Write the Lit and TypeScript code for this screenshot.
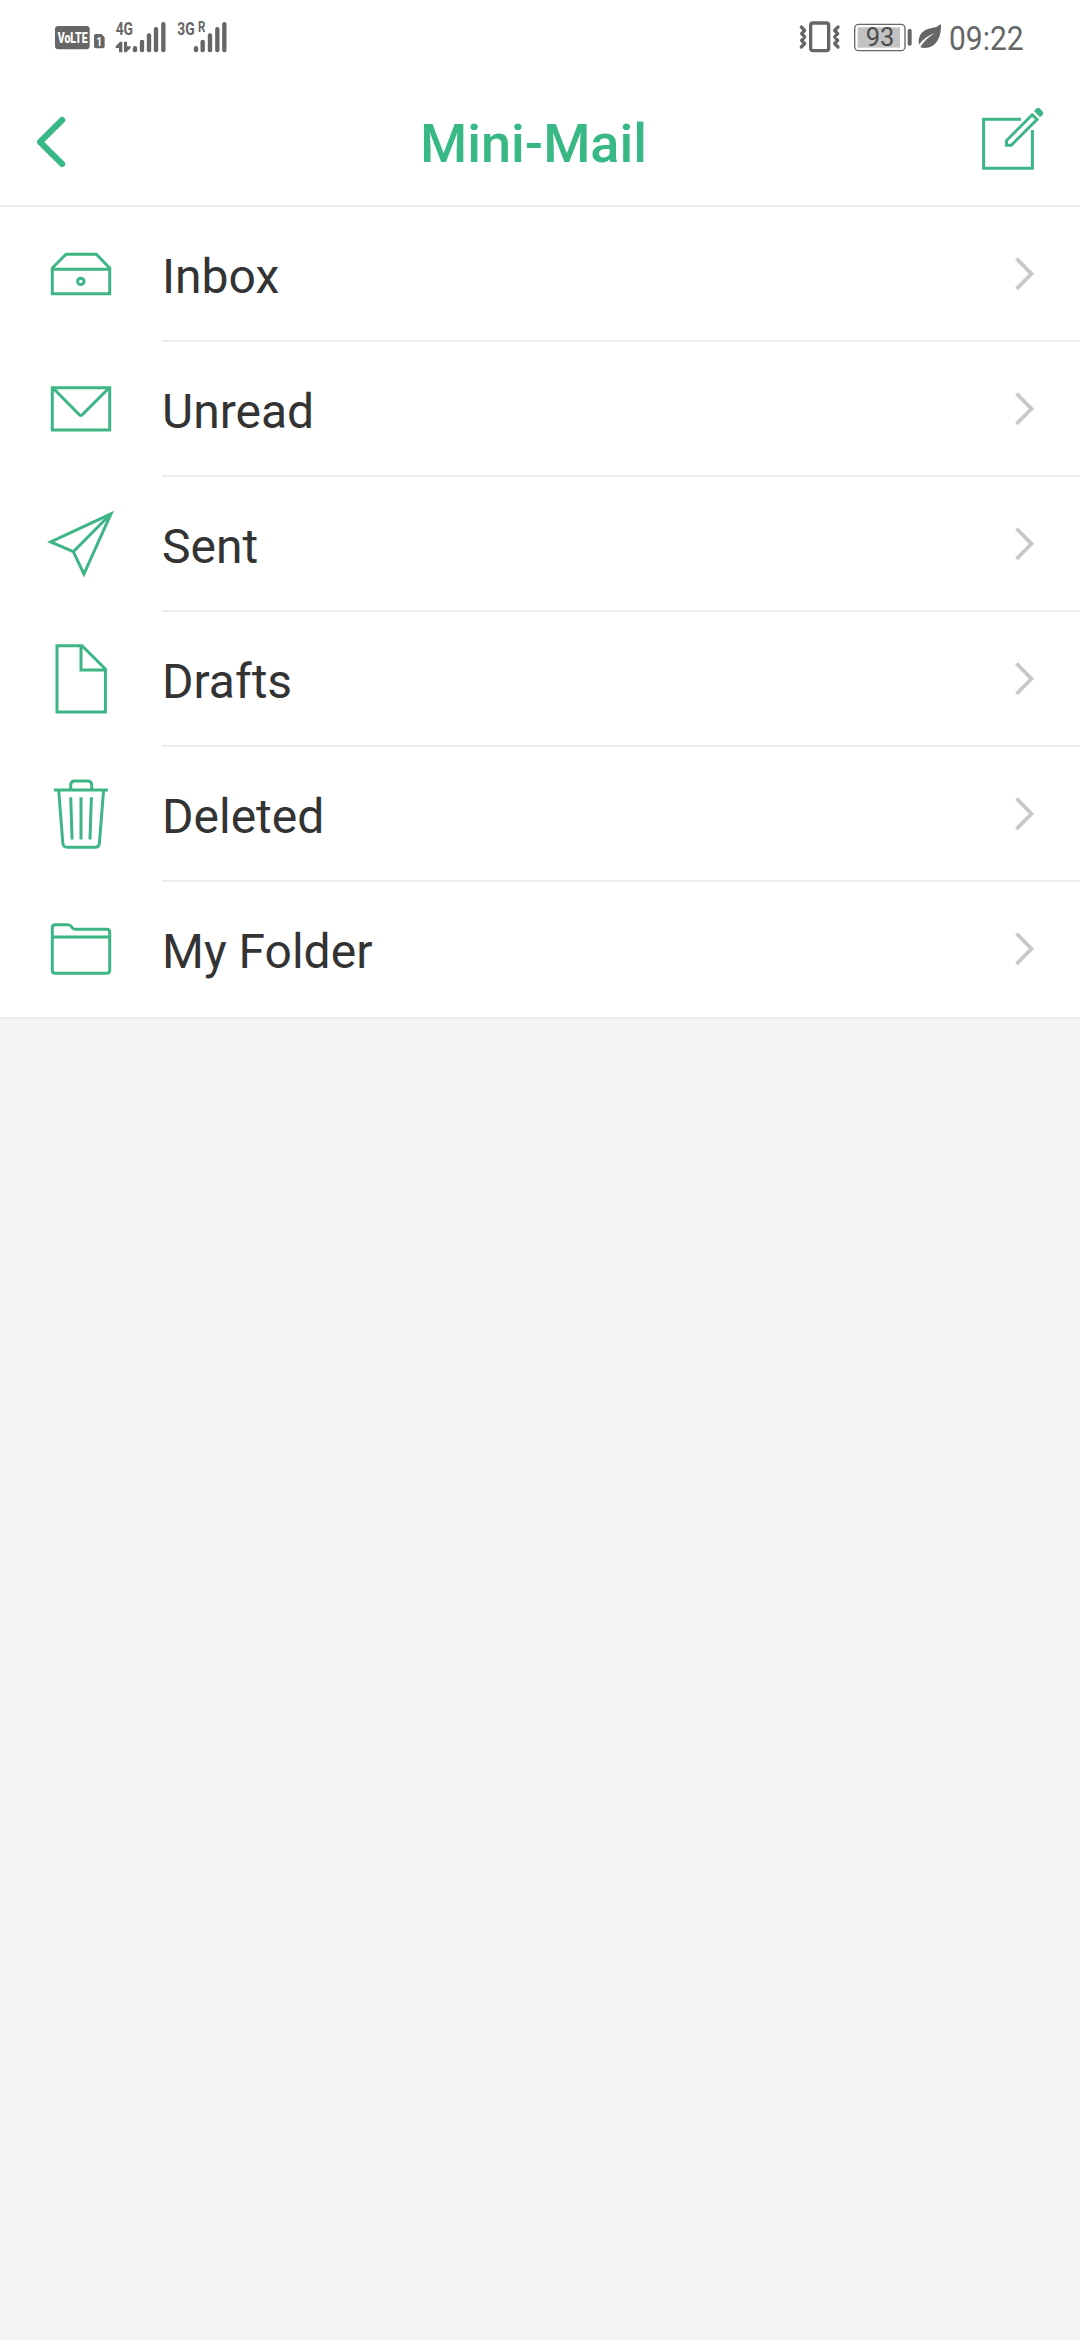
import { LitElement, html, css, svg } from "lit";
import { customElement } from "lit/decorators.js";

const folders = [
  {
    label: "Inbox",
    icon: svg`<path d="M11.3 35.3V34L25 20.3H55.3L68.7 34V59.7H11.3ZM11.3 35.3H68.7"/><circle cx="39.8" cy="47.4" r="3.2"/>`,
  },
  {
    label: "Unread",
    icon: svg`<path d="M11.3 18.7H68.7V61H11.3ZM13 20L37.8 45.2Q39.8 47.8 41.8 45.2L67 20"/>`,
  },
  {
    label: "Sent",
    icon: svg`<path d="M32.3 47.7L9.7 38L70 9.8L42.9 70ZM32.3 47.7L70 9.8"/>`,
  },
  {
    label: "Drafts",
    icon: svg`<path d="M16 6.7H41L64.4 30V73H16ZM40 6.7V31H64.4"/>`,
  },
  {
    label: "Deleted",
    icon: svg`<path d="M13 16H67M29.7 16V11Q29.7 6.9 33.8 6.9H46.6Q50.7 6.9 50.7 11V16M17.7 16L21.8 69Q22.2 73.3 26.2 73.3H54.2Q58 73.3 58.4 69L62.6 16M29.7 23.3L31.1 65.5M40 23.3V65.5M50.4 23.3L49 65.5"/>`,
  },
  {
    label: "My Folder",
    icon: svg`<path d="M11.3 28V18.7Q11.3 15.7 14.3 15.7H27Q29 15.7 30.5 17.7L31.6 19.1Q32.5 20.3 34.5 20.3H65.7Q68.7 20.3 68.7 23.3V61.2Q68.7 64.2 65.7 64.2H14.3Q11.3 64.2 11.3 61.2ZM11.3 28H68.7"/>`,
  },
];

@customElement("app-root")
export class AppRoot extends LitElement {
  static styles = css`
    :host {
      display: block;
      min-height: 2340px;
      background: #f4f4f4;
      font-family: Roboto, "Noto Sans", sans-serif;
      color: #333;
    }
    svg {
      display: block;
      flex: none;
    }
    .status {
      height: 75px;
      padding: 0 40px;
      display: flex;
      justify-content: space-between;
      background: #fff;
    }
    .ink {
      fill: #666;
    }
    .line {
      fill: none;
      stroke: #666;
    }
    .header {
      height: 130px;
      display: grid;
      grid-template-columns: 140px 1fr 140px;
      background: #fff;
      border-bottom: 2px solid #ececec;
    }
    .title {
      margin: 0;
      padding-right: 13px;
      font-size: 54px;
      font-weight: 500;
      line-height: 138px;
      height: 130px;
      text-align: center;
      color: #37b884;
    }
    .green {
      fill: none;
      stroke: #3db585;
      stroke-width: 3;
    }
    .back {
      fill: none;
      stroke: #37b884;
      stroke-width: 6;
      stroke-linecap: round;
      stroke-linejoin: round;
    }
    .eraser {
      fill: #3db585;
      stroke: none;
    }
    .list {
      margin: 0;
      padding: 0;
      list-style: none;
      background: #fff;
      border-bottom: 2px solid #ececec;
    }
    .row {
      height: 135px;
      display: flex;
      align-items: flex-start;
      box-sizing: border-box;
      padding-left: 41px;
    }
    .icon {
      margin: 27px 41px 0 0;
    }
    .body {
      flex: 1;
      height: 133px;
      display: flex;
      border-bottom: 2px solid #ececec;
    }
    .row:last-child .body {
      border-bottom: none;
    }
    .label {
      flex: 1;
      font-size: 48px;
      line-height: 140px;
    }
    .chevron {
      margin: 47px 40px 0 0;
      fill: none;
      stroke: #c8c8c8;
      stroke-width: 3.8;
    }
  `;

  private bars(xs: number[]) {
    const tops = [138, 119, 100, 81, 66];
    return xs.map(
      (x, i) => svg`<rect class="ink" x=${x - 6.5} y=${tops[i]} width="13" height=${157 - tops[i]} rx="6"/>`
    );
  }

  render() {
    return html`
      <div class="status">
        <svg width="200" height="75" viewBox="0 0 600 225">
          <rect class="ink" x="45" y="78" width="104" height="70" rx="10" />
          <text x="53" y="130" font-size="45" font-weight="900" fill="#fff" textLength="90" lengthAdjust="spacingAndGlyphs">VoLTE</text>
          <path class="ink" d="M168 102H184L194 112V139Q194 145 188 145H168Q162 145 162 139V108Q162 102 168 102Z" />
          <text x="169" y="138" font-size="38" font-weight="700" fill="#fff" textLength="18" lengthAdjust="spacingAndGlyphs">1</text>
          <text class="ink" x="227" y="106" font-size="56" font-weight="700" textLength="52" lengthAdjust="spacingAndGlyphs">4G</text>
          <path class="ink" d="M247 125V157H237V144H227V139L240 125ZM252 125H261V139H272V144L259 157H252Z" />
          ${this.bars([285, 306, 327, 348, 370])}
          <text class="ink" x="412" y="106" font-size="56" font-weight="700" textLength="52" lengthAdjust="spacingAndGlyphs">3G</text>
          <text class="ink" x="474" y="97" font-size="43" font-weight="700" textLength="22" lengthAdjust="spacingAndGlyphs">R</text>
          ${this.bars([468, 488, 510, 532, 553])}
        </svg>
        <svg width="260" height="75" viewBox="0 0 780 225">
          <rect class="line" x="92" y="69" width="54" height="83" rx="7" stroke-width="10" />
          <path class="line" stroke-width="10" stroke-linecap="round" stroke-linejoin="round"
            d="M64 81L74 91L65 101L74 111L65 121L74 131L64 141M174 81L164 91L173 101L164 111L173 121L164 131L174 141" />
          <rect class="line" x="224" y="73" width="151" height="79" rx="12" stroke-width="4" />
          <rect x="233" y="82" width="127" height="61" fill="#c2c2c2" />
          <rect class="ink" x="383" y="87" width="12" height="50" rx="5" />
          <text x="257" y="138" font-size="76" fill="#4c4c4c" textLength="86" lengthAdjust="spacingAndGlyphs">93</text>
          <path class="ink" d="M483 72C484 110 470 144 434 144Q426 144 421 142Q430 122 464 99Q432 112 417 134C412 103 430 88 455 84Q472 82 483 72Z" />
          <text class="ink" x="507" y="150" font-size="100" textLength="224" lengthAdjust="spacingAndGlyphs">09:22</text>
        </svg>
      </div>
      <header class="header">
        <svg class="back" width="140" height="130" viewBox="0 75 140 130">
          <path d="M62.2 120L40 142L62.2 164" />
        </svg>
        <h1 class="title">Mini-Mail</h1>
        <svg class="green" width="140" height="130" viewBox="940 75 140 130">
          <path d="M1021 119.3H983.6V168.2H1032.4V130" />
          <path d="M1006.5 145.2V140.5L1032.2 114.8L1037 119.5L1011.3 145.2Z" />
          <path class="eraser" d="M1034 111L1037 108H1039.5L1043 112V114.5L1040 117.3Z" />
        </svg>
      </header>
      <ul class="list">
        ${folders.map(
          (f) => html`<li class="row">
            <svg class="icon green" width="80" height="80" viewBox="0 0 80 80">${f.icon}</svg>
            <div class="body">
              <span class="label">${f.label}</span>
              <svg class="chevron" width="30" height="40" viewBox="1010 254 30 40">
                <path d="M1016.5 258.5L1031.5 273.8L1016.5 289" />
              </svg>
            </div>
          </li>`
        )}
      </ul>
    `;
  }
}
